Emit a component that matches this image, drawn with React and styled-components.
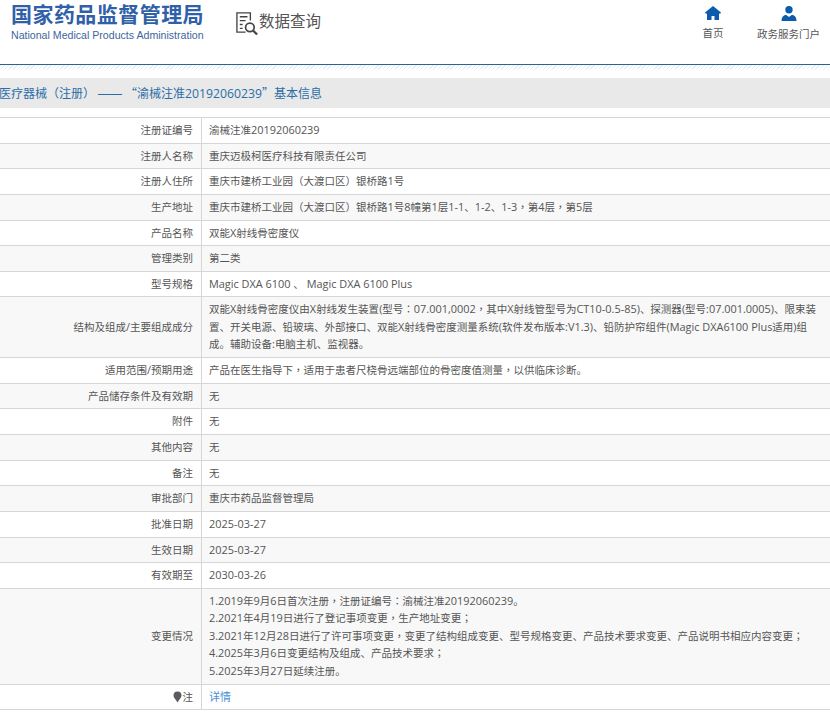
import React from "react";
import styled, { createGlobalStyle } from "styled-components";

const GlobalStyle = createGlobalStyle`
  html, body {
    margin: 0;
    padding: 0;
    background: #fff;
    overflow: hidden;
  }
  body {
    font-family: "Noto Sans CJK SC", sans-serif;
    font-size: 10.5px;
    color: #555;
  }
`;

const Page = styled.div`
  width: 830px;
  height: 714px;
  overflow: hidden;
`;

const Header = styled.header`
  display: flex;
  justify-content: space-between;
  height: 64px;
  border-bottom: 1px solid #2a6496;
`;

const HeaderLeft = styled.div`
  display: flex;
  align-items: flex-start;
`;

const Logo = styled.div`
  width: 203px;
  margin-left: 11px;
`;

const LogoTitle = styled.div`
  font-size: 21px;
  font-weight: 700;
  line-height: 24px;
  letter-spacing: 0.45px;
  margin-top: 1px;
  color: #2f60a8;
  white-space: nowrap;
`;

const LogoSub = styled.div`
  font-family: "Liberation Sans", sans-serif;
  font-size: 10.6px;
  line-height: 14px;
  margin-top: 3px;
  color: #3d669c;
  white-space: nowrap;
`;

const PageTitle = styled.div`
  display: flex;
  align-items: flex-start;
  margin-left: 21px;
  margin-top: 11px;
  font-size: 15.5px;
  line-height: 18px;
  color: #555;
`;

const HeaderNav = styled.nav`
  display: flex;
  padding-top: 6px;
`;

const NavItem = styled.div`
  display: flex;
  flex-direction: column;
  align-items: center;
  gap: 5px;
  width: ${(p) => p.$width}px;
  line-height: 16px;
  color: #555;
`;

const Hatch = styled.div`
  height: 13px;
  background: repeating-linear-gradient(135deg, #e8edf3 0 1px, #fff 1px 3px);
  mask-image: linear-gradient(#000 0, #000 3px, transparent 6px);
`;

const Band = styled.h1`
  margin: 0;
  padding: 0;
  height: 30px;
  line-height: 30px;
  background: #e9e9e9;
  color: #2a6da8;
  font-size: 12px;
  font-weight: 400;
  text-indent: -1px;
  white-space: nowrap;
`;

const BandDash = styled.span`
  font-family: "Liberation Sans", sans-serif;
  margin: 0 3px;
`;

const Table = styled.table`
  width: 830px;
  margin-top: 9px;
  border-collapse: collapse;
  table-layout: fixed;
  border-top: 1px solid #d6d6d6;
`;

const Row = styled.tr`
  border-bottom: 1px solid #d6d6d6;
  background: ${(p) => (p.$odd ? "#f8f8f8" : "#fff")};
`;

const Label = styled.th`
  width: 193px;
  padding: 3px 8px 4.15px 0;
  text-align: right;
  font-weight: 400;
  line-height: 17.5px;
  border-right: 1px solid #d6d6d6;
`;

const Value = styled.td`
  padding: 3px 12px 4.15px 7px;
  line-height: 17.5px;
`;

const Latin = styled.span`
  font-family: "Open Sans", sans-serif;
  font-size: ${(p) => p.$scale || 1.04}em;
`;

const WidePunct = styled.span`
  font-family: "Noto Sans CJK TC", sans-serif;
`;

const Link = styled.a`
  color: #4a90d9;
  font-size: 11px;
  text-decoration: none;
`;

const Pin = styled.svg`
  vertical-align: -2px;
  margin-right: 1px;
`;

const rows = [
  ["注册证编号", "渝械注准20192060239"],
  ["注册人名称", "重庆迈极柯医疗科技有限责任公司"],
  ["注册人住所", "重庆市建桥工业园（大渡口区）银桥路1号"],
  ["生产地址", "重庆市建桥工业园（大渡口区）银桥路1号8幢第1层1-1、1-2、1-3，第4层，第5层"],
  ["产品名称", "双能X射线骨密度仪"],
  ["管理类别", "第二类"],
  ["型号规格", "Magic DXA 6100 、 Magic DXA 6100 Plus"],
  [
    "结构及组成/主要组成成分",
    "双能X射线骨密度仪由X射线发生装置(型号：07.001,0002，其中X射线管型号为CT10-0.5-85)、探测器(型号:07.001.0005)、限束装置、开关电源、铅玻璃、外部接口、双能X射线骨密度测量系统(软件发布版本:V1.3)、铅防护帘组件(Magic DXA6100 Plus适用)组成。辅助设备:电脑主机、监视器。",
  ],
  ["适用范围/预期用途", "产品在医生指导下，适用于患者尺桡骨远端部位的骨密度值测量，以供临床诊断。"],
  ["产品储存条件及有效期", "无"],
  ["附件", "无"],
  ["其他内容", "无"],
  ["备注", "无"],
  ["审批部门", "重庆市药品监督管理局"],
  ["批准日期", "2025-03-27"],
  ["生效日期", "2025-03-27"],
  ["有效期至", "2030-03-26"],
  [
    "变更情况",
    [
      "1.2019年9月6日首次注册，注册证编号：渝械注准20192060239。",
      "2.2021年4月19日进行了登记事项变更，生产地址变更；",
      "3.2021年12月28日进行了许可事项变更，变更了结构组成变更、型号规格变更、产品技术要求变更、产品说明书相应内容变更；",
      "4.2025年3月6日变更结构及组成、产品技术要求；",
      "5.2025年3月27日延续注册。",
    ],
  ],
];

// latin runs and centred punctuation need another font than the CJK text
function Mixed({ text, scale }) {
  return text.split(/([\x20-\x7e]+|[，：；（）]+)/).map((part, i) => {
    if (!part) return null;
    if (/^[\x20-\x7e]/.test(part)) return <Latin key={i} $scale={scale}>{part}</Latin>;
    if (/^[，：；（）]/.test(part)) return <WidePunct key={i}>{part}</WidePunct>;
    return part;
  });
}

function DocSearchIcon() {
  return (
    <svg width="24" height="25" viewBox="0 0 25 26" fill="none" stroke="#444" strokeWidth="1.4">
      <path d="M11 22H2V2h14v8" />
      <path d="M5 6h8M5 10h6M5 14h3M5 18h3" />
      <circle cx="15.500" cy="17" r="4.500" strokeWidth="1.800" />
      <path d="M19 20.500l4 4" strokeWidth="2.400" />
    </svg>
  );
}

function HomeIcon() {
  return (
    <svg width="16" height="14" viewBox="0 0 16 14" fill="#0b5cad">
      <path d="M8 0L0 6.500 1 8l1-.7V14h4.500v-4h3v4H14V7.300l1 .7 1-1.500z" />
    </svg>
  );
}

function UserIcon() {
  return (
    <svg width="16" height="15" viewBox="0 0 16 15" fill="#0b5cad">
      <circle cx="8" cy="3.800" r="3.700" />
      <path d="M.5 15c0-3.500 1.500-5.500 4.500-6.200L8 11l3-2.200c3 .7 4.500 2.700 4.500 6.200z" />
    </svg>
  );
}

export default function App() {
  return (
    <Page>
      <GlobalStyle />
      <Header>
        <HeaderLeft>
          <Logo>
            <LogoTitle>国家药品监督管理局</LogoTitle>
            <LogoSub>National Medical Products Administration</LogoSub>
          </Logo>
          <PageTitle>
            <DocSearchIcon />
            数据查询
          </PageTitle>
        </HeaderLeft>
        <HeaderNav>
          <NavItem $width={68}>
            <HomeIcon />
            <span>首页</span>
          </NavItem>
          <NavItem $width={83}>
            <UserIcon />
            <span>政务服务门户</span>
          </NavItem>
        </HeaderNav>
      </Header>
      <Hatch />
      <Band>
        <Mixed text="医疗器械（注册）" />
        <BandDash>——</BandDash>
        “<Mixed text="渝械注准20192060239" scale={1.02} />”基本信息
      </Band>
      <Table>
        <tbody>
          {rows.map(([label, value], i) => (
            <Row key={label} $odd={i % 2 === 1}>
              <Label>
                <Mixed text={label} />
              </Label>
              <Value>
                {Array.isArray(value) ? (
                  value.map((line) => (
                    <div key={line}>
                      <Mixed text={line} />
                    </div>
                  ))
                ) : (
                  <Mixed text={value} />
                )}
              </Value>
            </Row>
          ))}
          <Row>
            <Label>
              <Pin width="9" height="12" viewBox="0 0 9 12">
                <path d="M4.500 .5a4 4 0 0 1 4 4c0 2.500-2.500 4-4 7-1.500-3-4-4.500-4-7a4 4 0 0 1 4-4z" fill="#5c5c5c" />
              </Pin>
              注
            </Label>
            <Value>
              <Link>详情</Link>
            </Value>
          </Row>
        </tbody>
      </Table>
    </Page>
  );
}
